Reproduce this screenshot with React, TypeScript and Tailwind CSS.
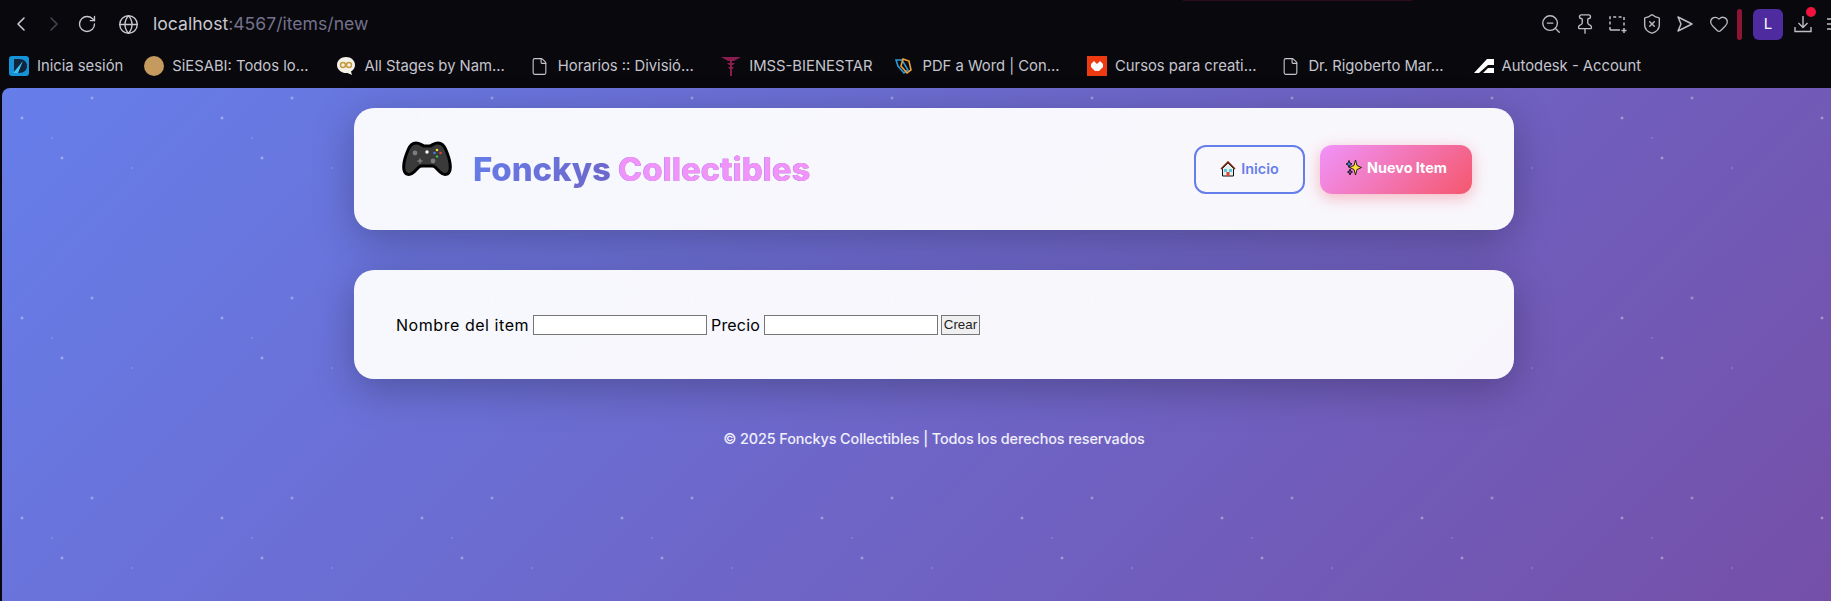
import { ChevronLeft, ChevronRight, File, Globe, Heart, Pin, RotateCw, ShieldX, ZoomOut } from "lucide-react";

function Controller() {
  return (
    <svg width="50" height="36" viewBox="0 0 50 36" className="mb-[20px] shrink-0">
      <path
        d="M14 2C10 2 8 4 6 9C3 16 1 24 2 29C3 34 8 35 12 31L17 26C18 25 19 25 20 25H30C31 25 32 25 33 26L38 31C42 35 47 34 48 29C49 24 47 16 44 9C42 4 40 2 36 2C32 2 31 4 28 5H22C19 4 18 2 14 2Z"
        fill="#3a3a3a"
        stroke="#000"
        strokeWidth="3"
      />
      <circle cx="13" cy="12" r="2.4" fill="#7d7d7d" />
      <circle cx="25" cy="11" r="1.7" fill="#fff" />
      <circle cx="35" cy="9" r="1.3" fill="#f4d835" />
      <circle cx="32.5" cy="12" r="1.3" fill="#3f7fe0" />
      <circle cx="38.5" cy="12" r="1.3" fill="#e0403a" />
      <circle cx="35" cy="15.5" r="1.3" fill="#3bb54a" />
      <path d="M18 17.5V22.5M15.5 20H20.5" stroke="#7d7d7d" strokeWidth="1.6" />
      <circle cx="31" cy="20" r="2.4" fill="#7d7d7d" />
    </svg>
  );
}

function House() {
  return (
    <svg width="16" height="16" viewBox="0 0 16 16" className="shrink-0">
      <path d="M2.5 7.5V15H13.5V7.5L8 2Z" fill="#dff1ee" stroke="#111" strokeWidth="1" />
      <path d="M1 8L8 1L15 8" fill="none" stroke="#7a2a17" strokeWidth="1.6" />
      <rect x="4" y="8" width="3" height="3" fill="#5fc5d8" />
      <rect x="9" y="8" width="3" height="3" fill="#5fc5d8" />
      <rect x="6.5" y="11" width="3" height="4" fill="#e0413a" />
    </svg>
  );
}

function Sparkles() {
  return (
    <svg width="17" height="17" viewBox="0 0 17 17" className="shrink-0">
      <path d="M4 1.5L5 4L7 5L5 6L4 8.5L3 6L1 5L3 4Z" fill="#2f86c9" stroke="#111" strokeWidth="0.9" />
      <path d="M5 10L5.8 12L7.5 13L5.8 14L5 16L4.2 14L2.5 13L4.2 12Z" fill="#6a3fa0" stroke="#111" strokeWidth="0.9" />
      <path d="M10.5 1L12 6.5L16.5 8.5L12 10.5L10.5 16L9 10.5L4.5 8.5L9 6.5Z" fill="#ffe236" stroke="#111" strokeWidth="0.9" />
    </svg>
  );
}

function Bookmark({ icon, label, gap }: { icon: React.ReactNode; label: string; gap: string }) {
  return (
    <div className={`flex items-center gap-2 whitespace-nowrap ${gap}`}>
      <span className="flex h-5 w-5 shrink-0 items-center justify-center">{icon}</span>
      <span className="text-[14.8px] leading-5 text-[#c5c5cd]">{label}</span>
    </div>
  );
}

function BrowserBars() {
  return (
    <>
      <header className="relative flex h-12 shrink-0 items-center">
        <div className="absolute left-[1183px] top-0 h-px w-[229px] bg-[#300b20]" />
        <ChevronLeft size={24} strokeWidth={1.6} className="ml-[9px] text-[#c8c8d0]" />
        <ChevronRight size={24} strokeWidth={1.6} className="ml-[9px] text-[#45444f]" />
        <RotateCw size={20} strokeWidth={1.6} className="ml-[11px] text-[#c8c8d0]" />
        <Globe size={21} strokeWidth={1.6} className="ml-[21px] text-[#c8c8d0]" />
        <span className="ml-[14px] text-[17.6px] text-[#c8c8d0]">
          localhost<span className="text-[#74718c]">:4567/items/new</span>
        </span>
        <div className="ml-auto mr-[-10px] flex items-center text-[#bdbdc6]">
          <ZoomOut size={22} strokeWidth={1.5} />
          <Pin size={22} strokeWidth={1.5} className="ml-[12px]" />
          <svg width="20" height="20" viewBox="0 0 20 20" fill="none" stroke="currentColor" strokeWidth="1.5" className="ml-[12px]">
            <path d="M2 16V3H16V13" strokeDasharray="3 2.4" />
            <path d="M2 16H12M16 14V19M13.5 16.5H18.5" />
          </svg>
          <ShieldX size={22} strokeWidth={1.5} className="ml-[13px]" />
          <svg width="18" height="18" viewBox="0 0 18 18" fill="none" stroke="currentColor" strokeWidth="1.5" className="ml-[13px]">
            <path d="M2 2L16 9L2 16L5 9Z" strokeLinejoin="round" />
          </svg>
          <Heart size={20} strokeWidth={1.5} className="ml-[15px]" />
          <div className="ml-[8px] h-[31px] w-[5px] rounded-sm bg-[#8f1537]" />
          <div className="ml-[11px] flex h-[31px] w-[30px] items-center justify-center rounded-md bg-[#4f2ba0] text-[15px] text-white">
            L
          </div>
          <div className="relative ml-[11px] flex w-[47px] items-center">
            <svg width="18" height="18" viewBox="0 0 18 18" fill="none" stroke="currentColor" strokeWidth="1.4">
              <path d="M9 1V12M4.5 8L9 12.5L13.5 8M1 12V16.5H17V12" />
            </svg>
            <span className="absolute left-[12px] top-[-8px] h-[10px] w-[10px] rounded-full bg-[#f0133f]" />
            <svg width="14" height="18" viewBox="0 0 14 18" fill="none" stroke="currentColor" strokeWidth="1.4" className="ml-[15px] shrink-0">
              <path d="M0 4H14M0 9H14M0 14H14" />
            </svg>
          </div>
        </div>
      </header>
      <nav className="flex h-10 shrink-0 items-center pb-[4px] pl-[9px]">
        <Bookmark
          gap=""
          label="Inicia sesión"
          icon={
            <svg width="20" height="20" viewBox="0 0 20 20">
              <rect width="20" height="20" rx="3" fill="#1593d6" />
              <path d="M5 3H10C15 3 18 6 18 10C18 14 15 17 10 17H5Z" fill="#10243c" />
              <path d="M4 17L14 5L9 17Z" fill="#3ec1ef" />
            </svg>
          }
        />
        <Bookmark
          gap="ml-[21px]"
          label="SiESABI: Todos lo..."
          icon={<span className="h-5 w-5 rounded-full bg-[#c49a5f]" />}
        />
        <Bookmark
          gap="ml-[28px]"
          label="All Stages by Nam..."
          icon={
            <svg width="20" height="20" viewBox="0 0 20 20">
              <path d="M10 1C15 1 19 4.500 19 9C19 12 17.500 14 15 15.500L16 19L11.500 17C6 17.500 1 14 1 9C1 4.500 5 1 10 1Z" fill="#f4f1e8" />
              <circle cx="7" cy="9" r="2.500" fill="none" stroke="#c59a3c" strokeWidth="1.500" />
              <circle cx="13" cy="9" r="2.500" fill="none" stroke="#c59a3c" strokeWidth="1.500" />
            </svg>
          }
        />
        <Bookmark
          gap="ml-[25px]"
          label="Horarios :: Divisió..."
          icon={<File size={19} strokeWidth={1.4} className="text-[#c5c5cd]" />}
        />
        <Bookmark
          gap="ml-[27.500px]"
          label="IMSS-BIENESTAR"
          icon={
            <svg width="20" height="20" viewBox="0 0 20 20" fill="#8a1c50">
              <path d="M0 1H20L13 5H11V20H9V5H7Z" />
              <path d="M6 7H14L12 9H8ZM7 11H13L11.500 13H8.500Z" />
            </svg>
          }
        />
        <Bookmark
          gap="ml-[22px]"
          label="PDF a Word | Con..."
          icon={
            <svg width="18" height="18" viewBox="0 0 18 18" fill="none" strokeWidth="1.6">
              <path d="M1 3H7L13 13L9 16L3 9Z" stroke="#2c9ad8" />
              <path d="M8 2L14 4L16 13L12 16L6 9Z" stroke="#f0a23a" />
            </svg>
          }
        />
        <Bookmark
          gap="ml-[27.500px]"
          label="Cursos para creati..."
          icon={
            <span className="flex h-5 w-5 items-center justify-center bg-[#ed3a10]">
              <svg width="12" height="10" viewBox="0 0 12 10" fill="#fff">
                <path d="M0 3L3 0L6 3L9 0L12 3V6L8 10H4L0 6Z" />
              </svg>
            </span>
          }
        />
        <Bookmark
          gap="ml-[24px]"
          label="Dr. Rigoberto Mar..."
          icon={<File size={19} strokeWidth={1.4} className="text-[#c5c5cd]" />}
        />
        <Bookmark
          gap="ml-[30px]"
          label="Autodesk - Account"
          icon={
            <svg width="20" height="14" viewBox="0 0 20 14" fill="#fff">
              <path d="M0 14L13 0H20V6H14L5 14ZM9 14L14 9H20V14Z" />
            </svg>
          }
        />
      </nav>
    </>
  );
}

export default function App() {
  return (
    <div className="flex h-[601px] w-[1831px] flex-col overflow-hidden bg-[#08080d] font-['Inter',sans-serif]">
      <BrowserBars />
      <div className="ml-[2px] min-h-0 flex-1 rounded-tl-[8px] bg-[linear-gradient(135deg,#667eea_0%,#764ba2_110%)]">
        <div className="h-full rounded-tl-[8px] bg-[radial-gradient(2px_2px_at_20px_30px,rgba(255,255,255,0.55),transparent),radial-gradient(2px_2px_at_90px_10px,rgba(255,255,255,0.5),transparent),radial-gradient(1px_1px_at_50px_50px,rgba(255,255,255,0.5),transparent),radial-gradient(2px_2px_at_60px_70px,rgba(255,255,255,0.55),transparent),radial-gradient(1px_1px_at_130px_80px,rgba(255,255,255,0.5),transparent)] bg-[length:200px_200px] pl-[352px] pt-5">
          <div className="w-[1160px]">
            <div className="flex h-[122px] items-center justify-between rounded-[20px] bg-white/95 pl-[48px] pr-[42px] shadow-[0_10px_40px_rgba(0,0,0,0.26)]">
              <div className="flex items-center gap-[21px]">
                <Controller />
                <h1 className="whitespace-nowrap bg-[linear-gradient(135deg,#667eea,#764ba2)] bg-clip-text text-[33px] leading-10 font-extrabold tracking-[-0.15px] text-transparent">
                  Fonckys <span className="text-[#f093fb]">Collectibles</span>
                </h1>
              </div>
              <div className="flex items-center gap-[15px] text-[14.4px] font-semibold">
                <a className="flex h-[49px] w-[111px] items-center justify-center gap-[5px] rounded-xl border-2 border-[#667eea] text-[#667eea]">
                  <House /> Inicio
                </a>
                <a className="flex h-[49px] w-[152px] items-center justify-center gap-[5px] rounded-xl bg-[linear-gradient(135deg,#f093fb,#f5576c)] pb-[3px] font-bold text-white shadow-[0_4px_15px_rgba(245,87,108,0.4)]">
                  <Sparkles /> Nuevo Item
                </a>
              </div>
            </div>
            <form className="mt-[40px] flex h-[109px] items-center whitespace-nowrap rounded-[20px] bg-white/95 pl-[42px] text-[16px] text-black shadow-[0_10px_40px_rgba(0,0,0,0.26)]">
              <label className="tracking-[0.55px]">Nombre del item</label>
              <input type="text" className="ml-[4px] h-[20px] w-[174px] border border-[#767676] bg-white" />
              <label className="ml-[4px] tracking-[0.15px]">Precio</label>
              <input type="text" className="ml-[4px] h-[20px] w-[174px] border border-[#767676] bg-white" />
              <button type="button" className="ml-[3px] h-[20px] w-[39px] border border-[#767676] bg-[#efefef] font-['Liberation_Sans',sans-serif] text-[13.33px] leading-none text-[#222]">
                Crear
              </button>
            </form>
            <footer className="mt-[50px] text-center text-[14.4px] leading-[20px] font-medium tracking-[-0.1px] text-white/90">
              © 2025 Fonckys Collectibles | Todos los derechos reservados
            </footer>
          </div>
        </div>
      </div>
    </div>
  );
}
